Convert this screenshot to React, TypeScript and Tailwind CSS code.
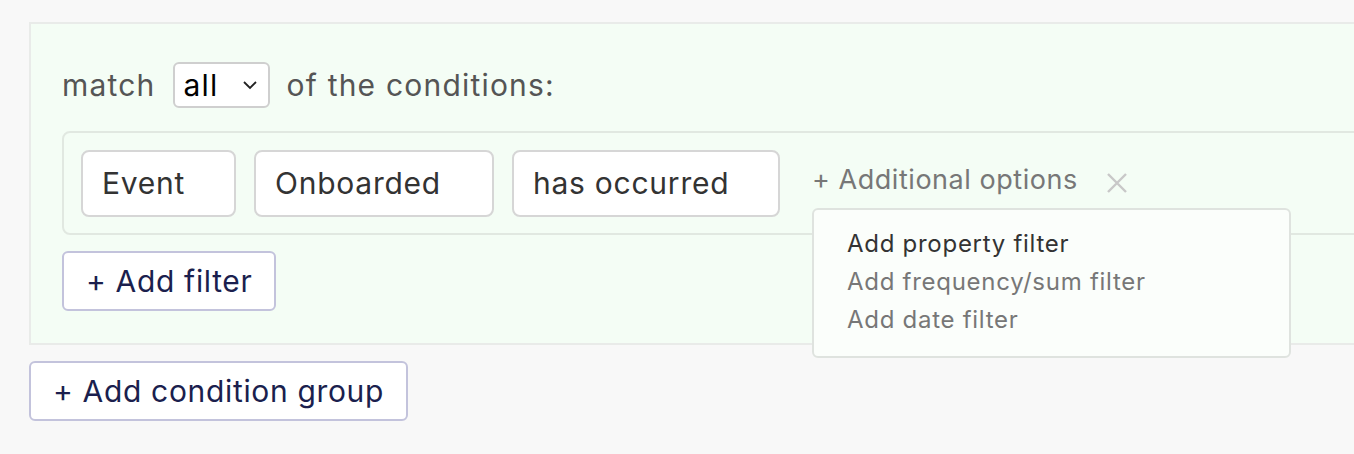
import React from 'react'

const font = { fontFamily: 'Inter, "Noto Sans", sans-serif' }

function FieldBox({ label, width }: { label: string; width: string }) {
  return (
    <div
      className={`${width} h-[67px] flex items-center pl-[19px] bg-white border-2 border-[#d6d6d6] rounded-[8px] text-[30px] tracking-[0.025em] text-[#333]`}
    >
      {label}
    </div>
  )
}

function OutlineButton({ children }: { children: React.ReactNode }) {
  return (
    <button className="h-[60px] px-[22px] flex items-center bg-white border-2 border-[#c3c3dc] rounded-[6px] text-[30px] tracking-[0.022em] text-[#1b1f4e]">
      {children}
    </button>
  )
}

export default function App() {
  return (
    <div className="w-[1354px] h-[454px] overflow-hidden bg-[#f8f8f8] pt-[22px] pl-[29px]" style={font}>
      {/* condition group */}
      <div className="w-[1400px] bg-[#f4fdf5] border-2 border-[#e9ebe9] pt-[38px] pl-[31px] pb-[32px]">
        <div className="flex items-center text-[30px] tracking-[0.04em] text-[#555]">
          <span>match</span>
          <div className="ml-[17px] mr-[17px] w-[97px] h-[46px] flex items-center justify-between pl-[9px] pr-[10px] bg-white border-2 border-[#cfcfcf] rounded-[6px] text-black">
            <span>all</span>
            <svg width="16" height="10" viewBox="0 0 16 10" fill="none" stroke="#222" strokeWidth="1.8">
              <path d="M2 2l6 6 6-6" />
            </svg>
          </div>
          <span>of the conditions:</span>
        </div>

        <div className="mt-[23px] border-2 border-[#e1e8e1] rounded-[8px] pt-[17px] pb-[16px] pl-[17px]">
          <div className="flex items-center gap-[18px]">
            <FieldBox label="Event" width="w-[155px]" />
            <FieldBox label="Onboarded" width="w-[240px]" />
            <FieldBox label="has occurred" width="w-[268px]" />
            <div className="relative ml-[14px] flex items-center">
              <span className="text-[27px] tracking-[0.02em] text-[#777] -mt-[7px]">+ Additional options</span>
              <svg className="ml-[28px] -mt-[2px]" width="22" height="22" viewBox="0 0 22 22" stroke="#c8c8c8" strokeWidth="2.4">
                <path d="M2 2l18 18M20 2L2 20" />
              </svg>
              <div className="absolute left-0 top-[41px] w-[479px] bg-[#fbfefb] border-2 border-[#dfe3df] rounded-[6px] pt-[19px] pb-[22px] pl-[33px] flex flex-col gap-[9px] text-[24px] tracking-[0.03em] leading-[29px]">
                <span className="text-[#333]">Add property filter</span>
                <span className="text-[#777]">Add frequency/sum filter</span>
                <span className="text-[#777]">Add date filter</span>
              </div>
            </div>
          </div>
        </div>

        <div className="mt-[16px] flex">
          <OutlineButton>+ Add filter</OutlineButton>
        </div>
      </div>

      <div className="mt-[16px] flex">
        <OutlineButton>+ Add condition group</OutlineButton>
      </div>
    </div>
  )
}
